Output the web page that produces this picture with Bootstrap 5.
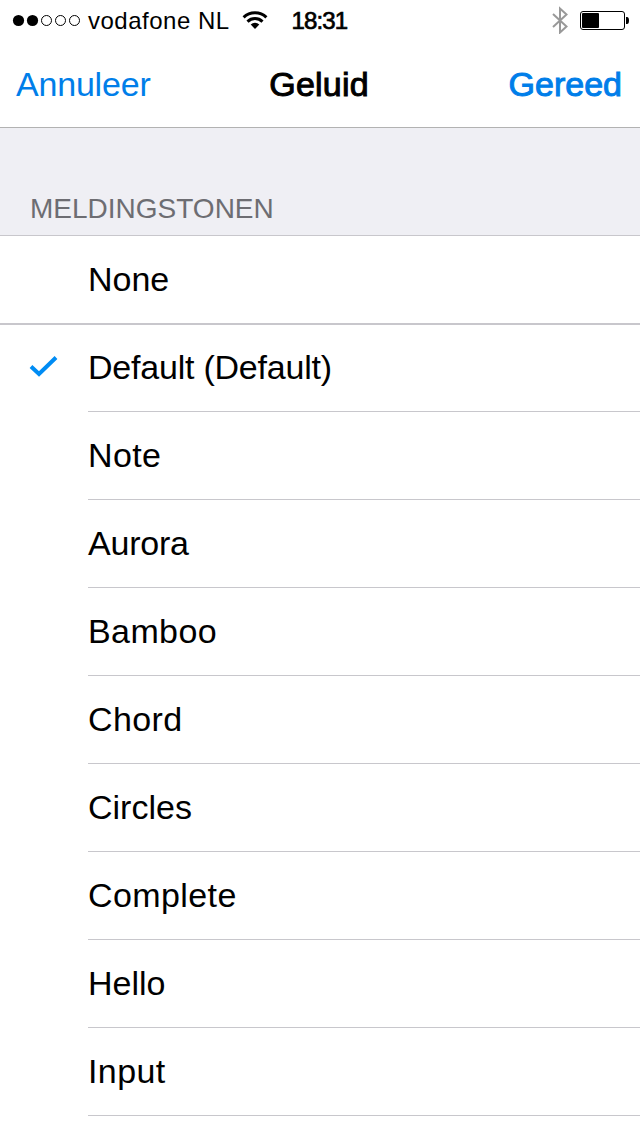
<!DOCTYPE html>
<html lang="nl">
<head>
<meta charset="utf-8">
<meta name="viewport" content="width=device-width, initial-scale=1">
<title>Geluid</title>
<link href="https://cdn.jsdelivr.net/npm/bootstrap@5.3.0/dist/css/bootstrap.min.css" rel="stylesheet">
<style>
  body { font-family: "Liberation Sans", Arial, sans-serif; color: #000; background: #fff; height: 1136px; overflow: hidden; }
  .statusbar { height: 40px; padding: 0 11px 0 12px; font-size: 24px; line-height: 40px; }
  .carrier { margin-left: 8px; padding-top: 2px; letter-spacing: .5px; }
  .wifi { margin-left: 12px; }
  .battery { margin-left: 11px; }
  .clock { margin-left: 24px; padding-top: 2px; letter-spacing: -.9px; -webkit-text-stroke: .7px #000; }
  .titlebar { height: 88px; padding: 2px 18px 0 16px; border-bottom: 1px solid #b2b2b2; font-size: 34px; line-height: 84px; }
  .titlebar a { flex: 1 1 0; color: #007ee9; text-decoration: none; }
  .cancel { letter-spacing: -.2px; }
  .medium { -webkit-text-stroke: 1px currentColor; }
  .title-text { letter-spacing: .2px; }
  .section-title { height: 108px; padding: 0 30px 10px; background: #efeff4; border-bottom: 1px solid #c8c7cc; color: #6d6d72; font-size: 28px; line-height: 32px; }
  .tones .list-group-item { height: 88px; padding: 0; border: 0; color: #000; background: #fff; font-size: 34px; }
  .tones .tick { width: 88px; padding: 0 0 5px 29px; flex: none; }
  .tones .label-cell { border-bottom: 1px solid #c8c7cc; line-height: 87px; }
  .tones .tone-none { height: 89px; border-bottom: 2px solid #c8c7cc; }
  .tones .tone-none .label-cell { border: 0; }
  .tones .tone-default { height: 87px; }
  .tones .tone-default .label-cell { line-height: 85px; }
  .tight { letter-spacing: -.22px; }
  .loose { letter-spacing: .4px; }
</style>
</head>
<body>
<header>
  <div class="statusbar d-flex align-items-center">
    <svg width="68" height="14" viewBox="0 0 68 14">
      <circle cx="6.5" cy="7.500" r="5.6"/><circle cx="20.5" cy="7.500" r="5.6"/>
      <g fill="none" stroke="#000"><circle cx="34.5" cy="7.500" r="5"/><circle cx="48.5" cy="7.500" r="5"/><circle cx="62.5" cy="7.500" r="5"/></g>
    </svg>
    <span class="carrier">vodafone NL</span>
    <svg class="wifi" width="26" height="20" viewBox="0 0 26 20">
      <g fill="none" stroke="#000" stroke-width="3"><path d="M1.6 7.4A16.3 16.3 0 0 1 24.4 7.4"/><path d="M5.5 11.6A10.7 10.7 0 0 1 20.500 11.6"/></g>
      <path d="M13 19 8.700 14.500A6.200 6.200 0 0 1 17.300 14.500Z"/>
    </svg>
    <span class="clock">18:31</span>
    <svg class="ms-auto" width="18" height="28" viewBox="0 0 18 28"><path d="M2 8 15.500 20.500 9 26.500V2.500L15.500 8.500 2 21" fill="none" stroke="#999" stroke-width="2"/></svg>
    <svg class="battery" width="49" height="20" viewBox="0 0 49 20">
      <rect x=".5" y="1.500" width="44" height="18" rx="2.500" fill="none" stroke="#000"/>
      <rect x="2" y="3" width="17" height="15" rx="1"/><path d="M46 7h1q2 0 2 3.500t-2 3.500h-1z"/>
    </svg>
  </div>
  <nav class="titlebar d-flex">
    <a href="#" class="cancel">Annuleer</a>
    <span class="medium title-text">Geluid</span>
    <a href="#" class="medium text-end">Gereed</a>
  </nav>
</header>
<main>
  <div class="section-title d-flex align-items-end">MELDINGSTONEN</div>
  <div class="list-group list-group-flush tones">
    <div class="list-group-item d-flex tone-none"><span class="tick"></span><span class="label-cell flex-fill">None</span></div>
    <div class="list-group-item d-flex tone-default"><span class="tick d-flex align-items-center"><svg width="29" height="24" viewBox="0 0 29 24"><path d="M2 12.500 10 20 27 3.500" fill="none" stroke="#008cf4" stroke-width="4"/></svg></span><span class="label-cell flex-fill tight">Default (Default)</span></div>
    <div class="list-group-item d-flex"><span class="tick"></span><span class="label-cell flex-fill loose">Note</span></div>
    <div class="list-group-item d-flex"><span class="tick"></span><span class="label-cell flex-fill tight">Aurora</span></div>
    <div class="list-group-item d-flex"><span class="tick"></span><span class="label-cell flex-fill loose">Bamboo</span></div>
    <div class="list-group-item d-flex"><span class="tick"></span><span class="label-cell flex-fill loose">Chord</span></div>
    <div class="list-group-item d-flex"><span class="tick"></span><span class="label-cell flex-fill">Circles</span></div>
    <div class="list-group-item d-flex"><span class="tick"></span><span class="label-cell flex-fill loose">Complete</span></div>
    <div class="list-group-item d-flex"><span class="tick"></span><span class="label-cell flex-fill">Hello</span></div>
    <div class="list-group-item d-flex"><span class="tick"></span><span class="label-cell flex-fill loose">Input</span></div>
  </div>
</main>
<script src="https://cdn.jsdelivr.net/npm/bootstrap@5.3.0/dist/js/bootstrap.bundle.min.js"></script>
</body>
</html>
